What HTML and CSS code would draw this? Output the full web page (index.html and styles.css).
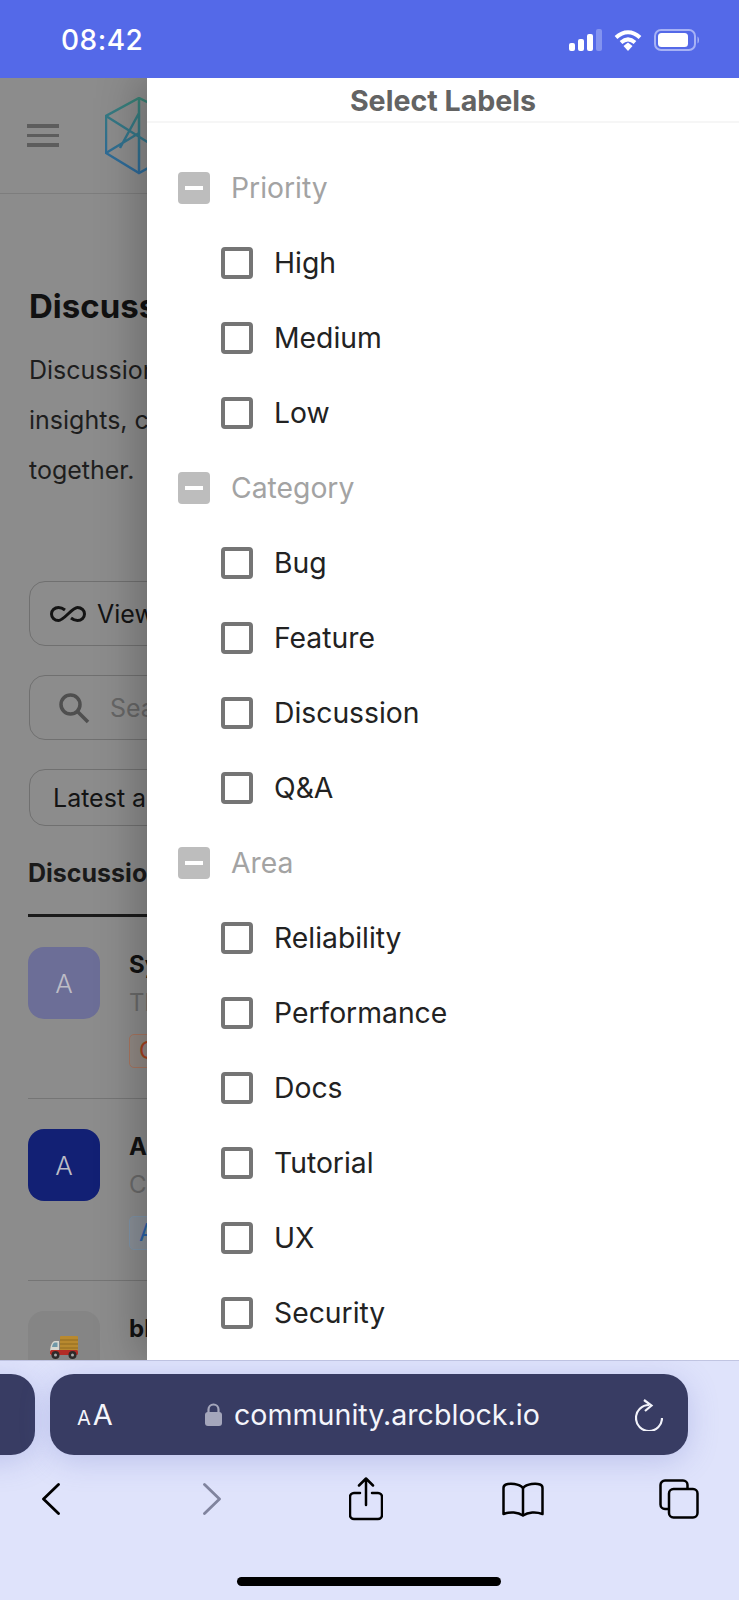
FILE: index.html
```html
<!DOCTYPE html>
<html lang="en">
<head>
    <meta charset="UTF-8">
    <meta name="viewport" content="width=device-width, initial-scale=1.0">
    <title>Select Labels</title>
    <link rel="stylesheet" href="styles.css">
</head>
<body>

<div class="phone">
    <div class="status-bar">
        <span class="time">08:42</span>
        <div class="status-icons">
            <svg class="signal" width="33" height="22" viewBox="0 0 33 22">
                <rect x="0" y="14" width="6" height="8" rx="2" fill="#fff"/>
                <rect x="9" y="10" width="6" height="12" rx="2" fill="#fff"/>
                <rect x="18" y="5" width="6" height="17" rx="2" fill="#fff"/>
                <rect x="27" y="0" width="6" height="22" rx="2" fill="#8393f0"/>
            </svg>
            <svg class="wifi" width="28" height="22" viewBox="0 0 28 22">
                <path d="M2 8.500C9.500 1.500 18.500 1.500 26 8.500" fill="none" stroke="#fff" stroke-width="4"/>
                <path d="M7 13.500C11.500 9.500 16.500 9.500 21 13.500" fill="none" stroke="#fff" stroke-width="4"/>
                <path d="M9.500 17L14 13.500L18.500 17L14 22Z" fill="#fff"/>
            </svg>
            <svg class="battery" width="46" height="22" viewBox="0 0 46 22">
                <rect x="1" y="1" width="40" height="20" rx="6" fill="none" stroke="#a7b2f5" stroke-width="2"/>
                <rect x="4" y="4" width="30" height="14" rx="3.500" fill="#fff"/>
                <path d="M43.500 7.500C45.500 8.500 45.500 13.500 43.500 14.500Z" fill="#a7b2f5"/>
            </svg>
        </div>
    </div>

    <div class="viewport">
        <div class="page">
            <div class="page-header">
                <div class="hamburger"><span></span><span></span><span></span></div>
                <svg class="logo" width="72" height="78" viewBox="0 0 72 78" fill="none" stroke="url(#logoGrad)" stroke-width="2.500">
                    <defs>
                        <linearGradient id="logoGrad" gradientUnits="userSpaceOnUse" x1="40" y1="0" x2="10" y2="78">
                            <stop offset="0" stop-color="#3a8374"/>
                            <stop offset="1" stop-color="#2c669e"/>
                        </linearGradient>
                    </defs>
                    <path d="M34 1L1 19V56L34 76L70 56V19Z"/>
                    <path d="M1 19L44 46M34 1V76M34 16L15 51M1 56L34 36"/>
                </svg>
            </div>

            <div class="intro">
                <h1>Discuss</h1>
                <p>Discussion</p>
                <p>insights, c</p>
                <p>together.</p>
            </div>

            <div class="filters">
                <div class="outline-btn view-btn">
                    <svg width="36" height="16" viewBox="0 0 36 16" fill="none" stroke="#141414" stroke-width="3">
                        <path d="M15 4C13 2.500 11 1.500 8.500 1.500C4.500 1.500 1.500 4.500 1.500 8C1.500 11.500 4.500 14.500 8.500 14.500C14 14.500 22 1.500 27.500 1.500C31.500 1.500 34.500 4.500 34.500 8C34.500 11.500 31.500 14.500 27.500 14.500C25 14.500 23 13.500 21 12"/>
                    </svg>
                    <span>View</span>
                </div>
                <div class="outline-btn search-btn">
                    <svg width="32" height="32" viewBox="0 0 32 32" fill="none" stroke="#4f4f4f" stroke-width="3.500">
                        <circle cx="12.500" cy="12.500" r="9.500"/>
                        <path d="M19.500 19.500L30 30"/>
                    </svg>
                    <span>Sea</span>
                </div>
                <div class="outline-btn sort-btn"><span>Latest a</span></div>
            </div>

            <div class="tab-row">
                <span class="tab">Discussio</span>
            </div>

            <div class="post">
                <div class="avatar avatar-soft">A</div>
                <div class="post-body">
                    <div class="post-title">Sy</div>
                    <div class="post-sub">Th</div>
                    <span class="tag tag-orange">C</span>
                </div>
            </div>
            <div class="post">
                <div class="avatar avatar-navy">A</div>
                <div class="post-body">
                    <div class="post-title">A</div>
                    <div class="post-sub">C</div>
                    <span class="tag tag-blue">A</span>
                </div>
            </div>
            <div class="post">
                <div class="avatar avatar-truck">
                    <svg width="30" height="25" viewBox="0 0 30 25">
                        <rect x="11" y="1" width="18" height="15" rx="1" fill="#b8892f"/>
                        <path d="M11 5H29M11 9H29M11 13H29" stroke="#8f6a22" stroke-width="1"/>
                        <path d="M1 18C1 11 3 6 6 6H10V20H1Z" fill="#d8d8d0"/>
                        <path d="M3 12C3.500 9 4.500 7.500 6 7.500H8.500V12Z" fill="#6f98a8"/>
                        <rect x="1" y="15" width="28" height="5" rx="1.500" fill="#b32c26"/>
                        <circle cx="6.500" cy="20" r="4" fill="#2e2a2a"/>
                        <circle cx="6.500" cy="20" r="1.500" fill="#a8a8a8"/>
                        <circle cx="23.500" cy="20" r="4" fill="#2e2a2a"/>
                        <circle cx="23.500" cy="20" r="1.500" fill="#a8a8a8"/>
                    </svg>
                </div>
                <div class="post-body">
                    <div class="post-title">bl</div>
                </div>
            </div>
        </div>

        <div class="drawer">
            <div class="drawer-title">Select Labels</div>
            <div class="label-list">
                <div class="row group"><span class="box box-mixed"></span>Priority</div>
                <div class="row"><span class="box"></span>High</div>
                <div class="row"><span class="box"></span>Medium</div>
                <div class="row"><span class="box"></span>Low</div>
                <div class="row group"><span class="box box-mixed"></span>Category</div>
                <div class="row"><span class="box"></span>Bug</div>
                <div class="row"><span class="box"></span>Feature</div>
                <div class="row"><span class="box"></span>Discussion</div>
                <div class="row"><span class="box"></span>Q&amp;A</div>
                <div class="row group"><span class="box box-mixed"></span>Area</div>
                <div class="row"><span class="box"></span>Reliability</div>
                <div class="row"><span class="box"></span>Performance</div>
                <div class="row"><span class="box"></span>Docs</div>
                <div class="row"><span class="box"></span>Tutorial</div>
                <div class="row"><span class="box"></span>UX</div>
                <div class="row"><span class="box"></span>Security</div>
            </div>
        </div>
    </div>

    <div class="safari">
        <div class="url-row">
            <div class="prev-tab"></div>
            <div class="url-pill">
                <span class="reader"><small>A</small>A</span>
                <div class="url">
                    <svg width="17" height="23" viewBox="0 0 17 23">
                        <path d="M3.500 11V6.500a5 5 0 0 1 10 0V11" fill="none" stroke="#a4a6bb" stroke-width="2.200"/>
                        <rect x="0" y="9" width="17" height="14" rx="3" fill="#a4a6bb"/>
                    </svg>
                    <span>community.arcblock.io</span>
                </div>
                <svg class="reload" width="28" height="32" viewBox="0 0 28 32" fill="none" stroke="#f2f3fa" stroke-width="2.200">
                    <path d="M14 6A13 13 0 1 0 27 19"/>
                    <path d="M9 1L16.500 6.500L10 12"/>
                </svg>
            </div>
        </div>
        <div class="nav-row">
            <svg class="nav-back" width="18" height="32" viewBox="0 0 18 32" fill="none" stroke="#000" stroke-width="2.800" stroke-linecap="round" stroke-linejoin="round">
                <path d="M16.500 1.500L1.500 16L16.500 30.500"/>
            </svg>
            <svg class="nav-forward" width="18" height="32" viewBox="0 0 18 32" fill="none" stroke="#80849e" stroke-width="2.800" stroke-linecap="round" stroke-linejoin="round">
                <path d="M1.500 1.500L16.500 16L1.500 30.500"/>
            </svg>
            <svg class="nav-share" width="34" height="44" viewBox="0 0 34 44" fill="none" stroke="#000" stroke-width="2.500" stroke-linecap="round" stroke-linejoin="round">
                <path d="M11 16H5a4 4 0 0 0-4 4V38a4 4 0 0 0 4 4H29a4 4 0 0 0 4-4V20a4 4 0 0 0-4-4H23"/>
                <path d="M17 28V2M10 8.500L17 1.500L24 8.500"/>
            </svg>
            <svg class="nav-book" width="42" height="35" viewBox="0 0 42 35" fill="none" stroke="#000" stroke-width="2.500" stroke-linecap="round" stroke-linejoin="round">
                <path d="M21 6C17 1.500 8 1 4 2.500C2 3.200 1.500 4.500 1.500 6V32C8 29.500 16 30 21 33.500C26 30 34 29.500 40.500 32V6C40.500 4.500 40 3.200 38 2.500C34 1 25 1.500 21 6Z"/>
                <path d="M21 6V33"/>
            </svg>
            <svg class="nav-tabs" width="40" height="40" viewBox="0 0 40 40" fill="none" stroke="#000" stroke-width="2.500">
                <path d="M10 30H6a4.500 4.500 0 0 1-4.500-4.500V6A4.500 4.500 0 0 1 6 1.500H24A4.500 4.500 0 0 1 28.500 6V10"/>
                <rect x="10" y="10" width="28.500" height="28.500" rx="4.500"/>
            </svg>
        </div>
        <div class="home-indicator"></div>
    </div>
</div>

</body>
</html>
```

FILE: styles.css
```css
body {
    font-family: Inter, "Noto Sans", sans-serif;
    margin: 0;
    padding: 0;
    background-color: #fff;
}

.phone {
    width: 739px;
    height: 1600px;
    display: flex;
    flex-direction: column;
    overflow: hidden;
}

/* status bar */
.status-bar {
    height: 78px;
    flex: none;
    display: flex;
    align-items: center;
    justify-content: space-between;
    box-sizing: border-box;
    padding: 1px 39px 0 61px;
    background-color: #5469e8;
    color: white;
}

.time {
    font-size: 28px;
    font-weight: 500;
    letter-spacing: 0.5px;
}

.status-icons {
    display: flex;
    align-items: center;
}

.signal {
    margin-right: 12px;
}

.battery {
    margin-left: 12px;
}

/* page behind the drawer, already dimmed */
.viewport {
    position: relative;
    flex: 1;
    overflow: hidden;
}

.page {
    height: 100%;
    background-color: #8c8c8c;
}

.page-header {
    height: 116px;
    box-sizing: border-box;
    display: flex;
    align-items: center;
    padding-left: 27px;
    border-bottom: 1px solid #7d7d7d;
}

.hamburger {
    width: 32px;
    display: flex;
    flex-direction: column;
    gap: 6px;
    margin-right: 46px;
}

.hamburger span {
    height: 3.500px;
    background-color: #5d5d5d;
}

.intro {
    padding: 90px 29px 0;
}

.intro h1 {
    margin: 0 0 17px;
    font-size: 33px;
    line-height: 44px;
    font-weight: 700;
    color: #111;
}

.intro p {
    margin: 0;
    font-size: 25px;
    line-height: 50px;
    color: #1e1e1e;
    white-space: nowrap;
}

.filters {
    padding: 86px 29px 0;
    display: flex;
    flex-direction: column;
    gap: 29px;
}

.outline-btn {
    width: 400px;
    height: 65px;
    box-sizing: border-box;
    display: flex;
    align-items: center;
    border: 1.500px solid #707070;
    border-radius: 16px;
    font-size: 25px;
    color: #141414;
}

.view-btn {
    padding-left: 20px;
    gap: 11px;
}

.search-btn {
    padding-left: 28px;
    gap: 20px;
}

.search-btn span {
    color: #666;
}

.sort-btn {
    height: 57px;
    padding-left: 23px;
}

.tab-row {
    margin: 27px 0 0 28px;
    height: 61px;
    width: 400px;
    border-bottom: 3px solid #1a1a1a;
}

.tab {
    font-size: 25px;
    font-weight: 700;
    line-height: 40px;
    color: #1a1a1a;
}

.post {
    margin-left: 28px;
    width: 400px;
    height: 182px;
    box-sizing: border-box;
    padding-top: 30px;
    display: flex;
    gap: 29px;
    border-bottom: 1px solid #757575;
}

.avatar {
    width: 72px;
    height: 72px;
    flex: none;
    display: flex;
    align-items: center;
    justify-content: center;
    border-radius: 16px;
    font-size: 26px;
    font-weight: 300;
    color: #bcbcc6;
}

.avatar-soft {
    background-color: #6c6e97;
}

.avatar-navy {
    background-color: #122074;
}

.avatar-truck {
    background-color: #858585;
}

.post-title {
    font-size: 24px;
    font-weight: 700;
    line-height: 36px;
    color: #111;
}

.post-sub {
    font-size: 24px;
    line-height: 40px;
    color: #6a6a6a;
}

.tag {
    display: inline-block;
    margin-top: 11px;
    padding: 0 9px;
    height: 34px;
    line-height: 32px;
    border-radius: 5px;
    font-size: 24px;
    box-sizing: border-box;
}

.tag-orange {
    color: #a8431e;
    border: 1px solid #a87660;
    background-color: #928a85;
}

.tag-blue {
    color: #2a62a8;
    border: 1px solid #7f94a8;
    background-color: #8a9098;
}

/* drawer */
.drawer {
    position: absolute;
    top: 0;
    bottom: 0;
    left: 147px;
    right: 0;
    background-color: #fff;
    box-shadow: -8px 0 40px rgba(0, 0, 0, 0.25);
}

.drawer-title {
    height: 45px;
    box-sizing: border-box;
    padding-top: 1px;
    text-align: center;
    font-size: 28.600px;
    line-height: 44px;
    font-weight: 700;
    color: #636363;
    border-bottom: 2px solid #f6f6f6;
}

.label-list {
    padding-top: 27px;
}

.row {
    height: 75px;
    display: flex;
    align-items: center;
    gap: 21px;
    padding-left: 74px;
    font-size: 28.300px;
    color: #222;
}

.row.group {
    padding-left: 31px;
    color: #a3a3a3;
}

.box {
    width: 32px;
    height: 32px;
    flex: none;
    box-sizing: border-box;
    border: 4px solid #757575;
    border-radius: 4px;
}

.box-mixed {
    display: flex;
    align-items: center;
    justify-content: center;
    border: none;
    background-color: #bdbdbd;
}

.box-mixed::after {
    content: "";
    width: 18px;
    height: 4px;
    background-color: #fff;
}

/* safari toolbar */
.safari {
    height: 240px;
    flex: none;
    box-sizing: border-box;
    display: flex;
    flex-direction: column;
    border-top: 1px solid #c1c5e2;
    background-color: #dfe3fb;
}

.url-row {
    display: flex;
    gap: 15px;
    margin: 13px 0 0 -100px;
}

.prev-tab {
    width: 135px;
    height: 81px;
    border-radius: 24px;
    background-color: #383c63;
    box-shadow: 0 6px 30px rgba(100, 110, 200, 0.28);
}

.url-pill {
    width: 638px;
    height: 81px;
    box-sizing: border-box;
    display: flex;
    align-items: center;
    padding: 0 25px 0 27px;
    border-radius: 24px;
    background-color: #383c63;
    color: #f4f5fb;
    box-shadow: 0 6px 30px rgba(100, 110, 200, 0.28);
}

.reader {
    font-size: 29px;
    width: 128px;
    white-space: nowrap;
}

.reader small {
    font-size: 20px;
    margin-right: 2px;
}

.url {
    flex: 1;
    display: flex;
    align-items: center;
    gap: 12px;
    font-size: 28.600px;
}

.nav-row {
    height: 44px;
    margin-top: 22px;
    display: flex;
    align-items: center;
}

.nav-back {
    margin-left: 42px;
}

.nav-forward {
    margin-left: 143px;
}

.nav-share {
    margin-left: 128px;
}

.nav-book {
    margin-left: 119px;
}

.nav-tabs {
    margin-left: 115px;
}

.home-indicator {
    width: 264px;
    height: 9px;
    margin: 56px 0 0 237px;
    border-radius: 5px;
    background-color: #000;
}
```
